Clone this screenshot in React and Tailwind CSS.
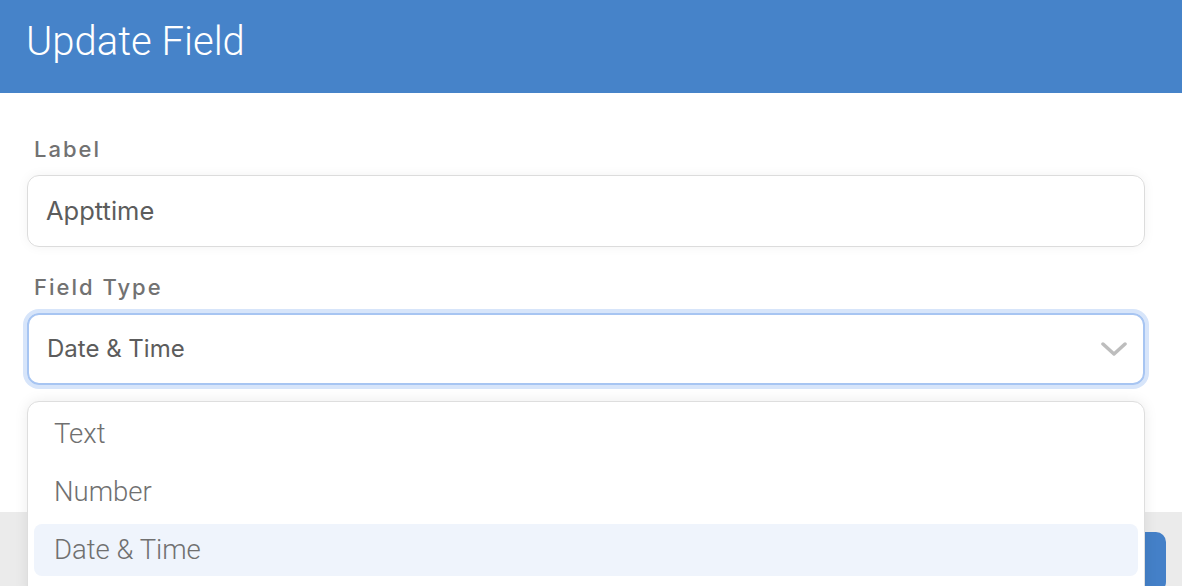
import React from 'react';

const options = ['Text', 'Number', 'Date & Time'];

const FieldLabel = ({ children, className = '' }) => (
  <div
    className={`h-[28px] leading-[28px] text-[22px] font-medium tracking-[2px] text-[#727272] ${className}`}
    style={{ fontFamily: 'Inter, "Liberation Sans", sans-serif' }}
  >
    {children}
  </div>
);

export default function App() {
  const selected = 'Date & Time';

  return (
    <div className="relative w-[1182px] h-[586px] overflow-hidden bg-white flex flex-col">
      {/* Header */}
      <div className="h-[93px] shrink-0 bg-[#4683c9] flex items-center px-[26px] pb-[10px]">
        <h1
          className="text-white text-[40px] font-light"
          style={{ fontFamily: 'Roboto, "Liberation Sans", sans-serif' }}
        >
          Update Field
        </h1>
      </div>

      {/* Form body */}
      <div className="h-[419px] shrink-0 px-[27px] pr-[37px] pt-[42px]">
        <FieldLabel className="pl-[7px]">Label</FieldLabel>
        <div
          className="mt-[12px] h-[72px] rounded-[12px] border-[1.5px] border-[#dcdcdc] shadow-[0_0_12px_rgba(0,0,0,0.05)] flex items-center pl-[18px] text-[25.5px] text-[#5c5c5c]"
          style={{ fontFamily: 'Inter, "Liberation Sans", sans-serif' }}
        >
          Appttime
        </div>

        <FieldLabel className="pl-[7px] mt-[26px]">Field Type</FieldLabel>
        <div
          className="mt-[12px] h-[72px] rounded-[12px] border-2 border-[#a7c5f2] ring-4 ring-[#d7e5fa] flex items-center justify-between pl-[18px] pr-[16px] text-[24px] text-[#5c5c5c]"
          style={{ fontFamily: 'Inter, "Liberation Sans", sans-serif' }}
        >
          <span>{selected}</span>
          <svg width="26" height="16" viewBox="0 0 26 16" fill="none">
            <polyline points="2,3 13,13 24,3" stroke="#bdbdbd" strokeWidth="3.5" strokeLinecap="round" strokeLinejoin="round" />
          </svg>
        </div>
      </div>

      {/* Footer */}
      <div className="flex-1 bg-[#ebebeb] flex justify-end items-start pt-[20px] pr-[16px]">
        <button className="w-[140px] h-[60px] rounded-[10px] bg-[#4480c8]" />
      </div>

      {/* Open dropdown menu */}
      <div
        className="absolute left-[27px] top-[401px] w-[1118px] h-[200px] rounded-[12px] border-[1.5px] border-[#dedede] bg-white shadow-[0_0_14px_rgba(0,0,0,0.08)] px-[6px] pt-[6px]"
        style={{ fontFamily: 'Roboto, "Liberation Sans", sans-serif' }}
      >
        {options.map((opt) => (
          <div
            key={opt}
            className={`h-[52px] mb-[6px] rounded-[8px] flex items-center pl-[20px] text-[27.5px] font-light text-[#707070] ${
              opt === selected ? 'bg-[#eff4fc]' : ''
            }`}
          >
            {opt}
          </div>
        ))}
      </div>
    </div>
  );
}
